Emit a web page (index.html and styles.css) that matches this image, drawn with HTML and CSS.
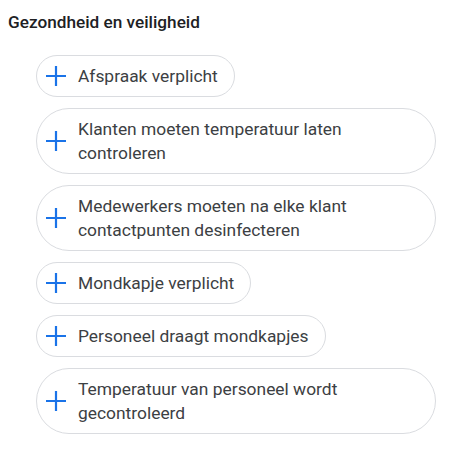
FILE: index.html
```html
<!DOCTYPE html>
<html lang="nl">
<head>
<meta charset="utf-8">
<link rel="stylesheet" href="styles.css">
</head>
<body>
<div class="section">
  <h2 class="title">Gezondheid en veiligheid</h2>
  <div class="chips">
    <button class="chip"><svg class="plus" viewBox="0 0 22 22"><path d="M11 1v20M1 11h20"/></svg><span class="label">Afspraak verplicht</span></button>
    <button class="chip"><svg class="plus" viewBox="0 0 22 22"><path d="M11 1v20M1 11h20"/></svg><span class="label">Klanten moeten temperatuur laten controleren</span></button>
    <button class="chip"><svg class="plus" viewBox="0 0 22 22"><path d="M11 1v20M1 11h20"/></svg><span class="label">Medewerkers moeten na elke klant contactpunten desinfecteren</span></button>
    <button class="chip"><svg class="plus" viewBox="0 0 22 22"><path d="M11 1v20M1 11h20"/></svg><span class="label">Mondkapje verplicht</span></button>
    <button class="chip"><svg class="plus" viewBox="0 0 22 22"><path d="M11 1v20M1 11h20"/></svg><span class="label">Personeel draagt mondkapjes</span></button>
    <button class="chip"><svg class="plus" viewBox="0 0 22 22"><path d="M11 1v20M1 11h20"/></svg><span class="label">Temperatuur van personeel wordt gecontroleerd</span></button>
  </div>
</div>
</body>
</html>
```
FILE: styles.css
```css
html, body {
  margin: 0;
  padding: 0;
  background: #ffffff;
}
body {
  font-family: Roboto, "Liberation Sans", Arial, sans-serif;
  color: #202124;
}
.section {
  padding: 10px 0 0 8px;
}
.title {
  margin: 0;
  font-size: 17.2px;
  line-height: 24px;
  font-weight: 500;
  color: #202124;
}
.chips {
  display: flex;
  flex-direction: column;
  align-items: flex-start;
  gap: 11px;
  margin-top: 21px;
  padding-left: 28px;
}
.chip {
  display: flex;
  align-items: center;
  max-width: 400px;
  box-sizing: border-box;
  margin: 0;
  padding: 8px 16px 8px 8px;
  border: 1px solid #dadce0;
  border-radius: 34px;
  background: #ffffff;
  font-family: inherit;
  font-size: 17.4px;
  line-height: 24px;
  color: #3c4043;
  text-align: left;
  cursor: pointer;
}
.plus {
  flex: none;
  width: 22px;
  height: 22px;
  margin-right: 11px;
  fill: none;
  stroke: #1a73e8;
  stroke-width: 2.2;
}
.label {
  display: block;
}
```
